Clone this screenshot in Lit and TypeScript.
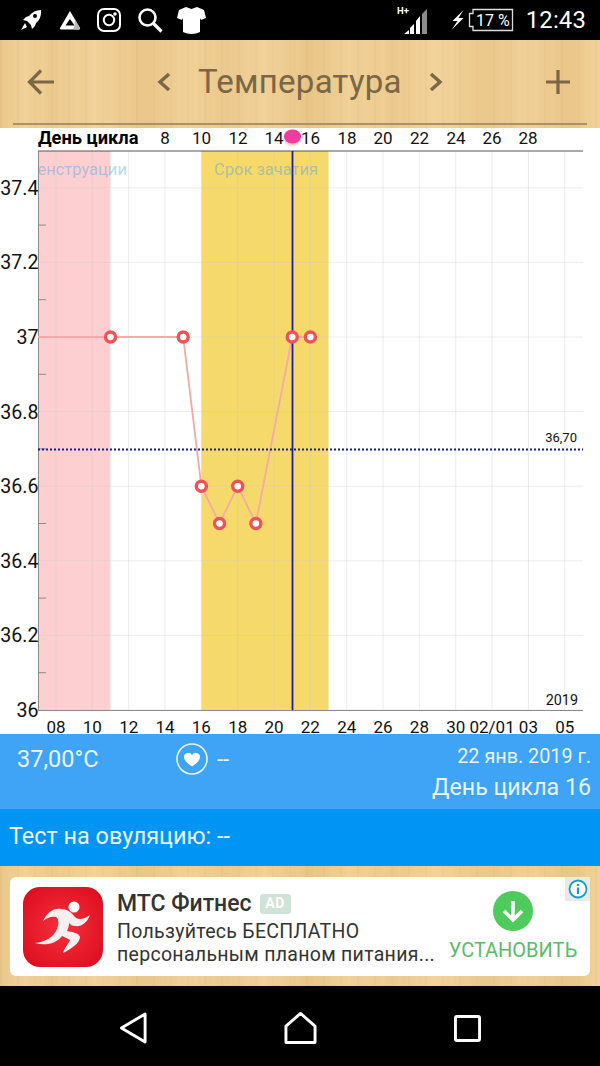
import { LitElement, css, html, svg } from "lit";
import { customElement } from "lit/decorators.js";

const WOOD = css`
  background-color: #eecc91;
  background-image:
    linear-gradient(90deg,
      rgba(190,140,60,.08) 0, rgba(255,235,190,.14) 4%, rgba(190,140,60,.04) 9%,
      rgba(255,235,190,.18) 16%, rgba(190,140,60,.10) 24%, rgba(255,235,190,.12) 31%,
      rgba(190,140,60,.05) 38%, rgba(255,235,190,.16) 44%, rgba(190,140,60,.12) 52%,
      rgba(255,235,190,.12) 58%, rgba(190,140,60,.03) 66%, rgba(255,235,190,.20) 73%,
      rgba(190,140,60,.08) 81%, rgba(255,235,190,.10) 88%, rgba(190,140,60,.10) 95%, rgba(255,235,190,.18) 100%),
    repeating-linear-gradient(90deg, rgba(170,120,50,.05) 0 2px, transparent 2px 7px, rgba(255,240,200,.05) 7px 11px, transparent 11px 17px);
`;

// one grid column is two days wide
const px = (day: number) => 56 + day * 18.17;
const py = (t: number) => 710 - (t - 36) * 373;

const TOP_LABELS = [[165, "8"], [201.5, "10"], [238, "12"], [274, "14"], [310.5, "16"], [347, "18"], [383, "20"], [419.5, "22"], [456, "24"], [492, "26"], [528, "28"]] as const;
const BOTTOM_LABELS = ["08", "10", "12", "14", "16", "18", "20", "22", "24", "26", "28", "30", "02/01", "03", "05"];
const Y_LABELS = [["37.4", 37.4], ["37.2", 37.2], ["37", 37], ["36.8", 36.8], ["36.6", 36.6], ["36.4", 36.4], ["36.2", 36.2], ["36", 36]] as const;
const TICKS = [37.3, 37.1, 36.9, 36.7, 36.5, 36.3, 36.1];
const POINTS: [number, number][] = [[3, 37], [7, 37], [8, 36.6], [9, 36.5], [10, 36.6], [11, 36.5], [13, 37], [14, 37]];

@customElement("temp-chart")
class TempChart extends LitElement {
  static styles = css`
    :host { display: block; height: 606px; background: #fff; }
    svg { display: block; overflow: visible; }
    text { font-family: Roboto, "Liberation Sans", sans-serif; fill: #111; }
    .cyc { font-size: 18.3px; font-weight: 700; fill: #000; }
    .top { font-size: 17px; text-anchor: middle; }
    .bot { font-size: 17px; text-anchor: middle; }
    .ylab { font-size: 19.6px; text-anchor: end; }
    .small { font-size: 13px; text-anchor: end; }
    .year { font-size: 14.4px; text-anchor: end; }
    .band { font-size: 16.5px; fill: #3f9fe6; fill-opacity: .42; }
    .grid { stroke: #c9c9c9; stroke-opacity: .35; stroke-width: 1; }
  `;

  render() {
    const verts = BOTTOM_LABELS.map((_, i) => px(i * 2));
    const line = `38,337 ${POINTS.map(([d, t]) => `${px(d)},${py(t)}`).join(" ")}`;
    return html`<svg width="600" height="606" viewBox="0 128 600 606">
      <defs>
        <clipPath id="plot"><rect x="38" y="151" width="545" height="559"></rect></clipPath>
        <filter id="sh" x="-40%" y="-40%" width="180%" height="180%">
          <feDropShadow dx="0" dy="1.5" stdDeviation="1.5" flood-color="#000" flood-opacity=".3"></feDropShadow>
        </filter>
      </defs>
      <rect x="38" y="151" width="72.5" height="559" fill="#fdcfd1"></rect>
      <rect x="201.5" y="151" width="127" height="559" fill="#f6d96b"></rect>
      ${verts.map((x) => svg`<line class="grid" x1=${x} x2=${x} y1="151" y2="710"></line>`)}
      ${Y_LABELS.map(([, t]) => svg`<line class="grid" x1="38" x2="583" y1=${py(t)} y2=${py(t)}></line>`)}
      ${TICKS.map((t) => svg`<line x1="38" x2="46" y1=${py(t)} y2=${py(t)} stroke="#8a8a8a"></line>`)}
      <g clip-path="url(#plot)">
        <text class="band" x="23" y="175">Менструации</text>
        <text class="band" x="214" y="175">Срок зачатия</text>
      </g>
      <line x1="38" x2="583" y1="151" y2="151" stroke="#555"></line>
      <line x1="38.5" x2="38.5" y1="151" y2="710" stroke="#8c8c8c"></line>
      <line x1="38" x2="583" y1="710.5" y2="710.5" stroke="#8c8c8c"></line>
      <polyline points=${line} fill="none" stroke="#f5a9a9" stroke-width="1.8"></polyline>
      <line x1="38" x2="583" y1="449.5" y2="449.5" stroke="#1818b0" stroke-width="2" stroke-dasharray="2 2"></line>
      <line x1="292.5" x2="292.5" y1="151" y2="710" stroke="#1f1fa5" stroke-width="1.8"></line>
      ${POINTS.map(([d, t]) => svg`<circle cx=${px(d)} cy=${py(t)} r="5" fill="#fff" stroke="#ee5257" stroke-width="3.4"></circle>`)}
      <text class="cyc" x="38" y="144">День цикла</text>
      ${TOP_LABELS.map(([x, l]) => svg`<text class="top" x=${x} y="144">${l}</text>`)}
      <ellipse cx="292.5" cy="136.500" rx="8.500" ry="7" fill="#ee3a9f" filter="url(#sh)"></ellipse>
      ${Y_LABELS.map(([l, t]) => svg`<text class="ylab" x="38.500" y=${py(t) + 7}>${l}</text>`)}
      ${BOTTOM_LABELS.map((l, i) => svg`<text class="bot" x=${px(i * 2)} y="733">${l}</text>`)}
      <text class="small" x="577" y="442">36,70</text>
      <text class="year" x="578" y="705">2019</text>
    </svg>`;
  }
}

@customElement("app-root")
export class AppRoot extends LitElement {
  static styles = [css`
    :host { display: block; width: 600px; height: 1066px; overflow: hidden; font-family: Roboto, "Liberation Sans", sans-serif; }
    .status { height: 40px; background: #000; display: flex; align-items: center; color: #fff; }
    .status svg { display: block; flex: none; }
    .left { display: flex; align-items: center; gap: 16px; padding-left: 19px; }
    .right { margin-left: auto; display: flex; align-items: center; padding-right: 14px; }
    .time { font-size: 23.8px; margin-left: 12px; letter-spacing: .2px; }
    .hdr { height: 88px; box-sizing: border-box; padding: 0 13px 3px; }
    .hdr-row { height: 85px; box-sizing: border-box; display: flex; align-items: center; color: #7b6646; border-bottom: 2px solid #a8926b; }
    .hdr-row svg { display: block; flex: none; }
    .title { font-size: 33px; margin: 0 26px 0 26px; white-space: nowrap; letter-spacing: .25px; }
    .spacer { flex: 1; }
    .info { height: 75px; background: #3fa3f6; color: #eaf5ff; display: flex; box-sizing: border-box; padding: 0 9px 0 17px; }
    .temp { font-size: 23.5px; margin-top: 11px; width: 159px; }
    .heart { margin-top: 10px; display: flex; gap: 9px; font-size: 22px; align-items: center; height: 30px; }
    .heart svg { display: block; }
    .date { margin-left: auto; text-align: right; }
    .d1 { font-size: 19.8px; margin-top: 10px; line-height: 26px; }
    .d2 { font-size: 23.2px; line-height: 32px; margin-top: 1px; }
    .test { height: 57px; background: #0094f4; color: #eaf5ff; font-size: 23.4px; display: flex; align-items: center; padding: 0 0 4px 9px; box-sizing: border-box; }
    .adwrap { height: 120px; box-sizing: border-box; padding: 11px 10px 10px; }
    .ad { position: relative; height: 99px; background: #fff; border-radius: 6px; display: flex; align-items: center; padding-left: 13px; box-sizing: border-box; }
    .ad svg { display: block; flex: none; }
    .copy { margin-left: 14px; width: 332px; color: #333; margin-top: 2px; }
    .name { display: flex; align-items: center; font-size: 23px; font-weight: 500; line-height: 33px; margin-top: -2px; }
    .tag { margin-left: 8px; width: 31px; height: 20px; background: #cfe3d8; color: #fff; font-size: 14px; font-weight: 700; border-radius: 3px; display: flex; align-items: center; justify-content: center; letter-spacing: .5px; }
    .line { font-size: 19.5px; line-height: 23px; white-space: nowrap; letter-spacing: .3px; }
    .cta { width: 128px; display: flex; flex-direction: column; align-items: center; color: #5cbb68; font-size: 20px; white-space: nowrap; }
    .cta span { margin-top: 7px; line-height: 24px; }
    .i { position: absolute; right: 0; top: 0; width: 25px; height: 24px; background: #e9e9e9; display: flex; align-items: center; justify-content: center; }
    .nav { height: 80px; background: #000; display: flex; align-items: center; justify-content: center; padding-top: 4px; box-sizing: border-box; }
    .nav svg { display: block; flex: none; }
  `, css`.wood { ${WOOD} }`];

  render() {
    return html`
      <div class="status">
        <div class="left">
          <svg width="24" height="26" viewBox="0 0 24 26"><path fill="#fff" d="M22 3c-5 0-9 2-12 6l-3 1-3 3 4 1 4 4 1 4 3-3 1-3c4-3 5.500-8 5-13zM16 7a2 2 0 110 4 2 2 0 010-4zM6 16l-4 7 6-3z"/></svg>
          <svg width="22" height="20" viewBox="0 0 22 20"><path fill="#fff" fill-rule="evenodd" d="M11 1l10 17a1 1 0 01-1 1.500H2A1 1 0 011 18zm0 8l-4.500 6.500h9z"/><path fill="#b5b5b5" d="M16 9.500l5 8.500-1 1.500h-6l1.500-4z"/></svg>
          <svg width="24" height="24" viewBox="0 0 24 24" fill="none" stroke="#fff" stroke-width="2"><rect x="1" y="1" width="22" height="22" rx="6"/><circle cx="12" cy="12" r="5.200"/><circle cx="18" cy="6" r=".8" fill="#fff"/></svg>
          <svg width="26" height="26" viewBox="0 0 26 26" fill="none" stroke="#fff"><circle cx="10.500" cy="10.500" r="8" stroke-width="2.600"/><path d="M16.500 16.500l8 8" stroke-width="3.200"/></svg>
          <svg width="29" height="27" viewBox="0 0 29 27" style="margin-left:-2px"><path fill="#fff" d="M9 0l5.500 2L20 0l7 3 2 8-5 2-1-2v14c-5 2.500-12 2.500-17 0V11l-1 2-5-2 2-8z"/></svg>
        </div>
        <div class="right">
          <svg width="31" height="30" viewBox="0 0 31 30"><text x="0" y="9" font-size="9.500" font-weight="700" fill="#fff" font-family="Roboto, sans-serif">H+</text><path fill="#fff" d="M7 29l5-4v4zM13 29v-6l4-4v10zM19 29V16l4-5v18z"/><path fill="#8c8c8c" d="M25 29V9l5-5v25z"/></svg>
          <svg width="15" height="22" viewBox="0 0 14 22" style="margin-left:22px"><path fill="#fff" d="M13 1L2 12h5l-6 9 12-12H8z"/></svg>
          <svg width="46" height="24" viewBox="0 0 46 24" style="margin-left:3px"><path fill="none" stroke="#ddd" stroke-width="1.300" d="M5 5.500V1.500h39.500v21H5v-4H1.500v-13z"/><text x="8" y="18" font-size="16" fill="#fff" font-family="Roboto, sans-serif">17 %</text></svg>
          <span class="time">12:43</span>
        </div>
      </div>

      <div class="hdr wood">
        <div class="hdr-row">
          <svg width="30" height="30" viewBox="0 0 30 30" fill="none" stroke="currentColor" stroke-width="3.200" style="margin-left:13px"><path d="M28 15H4M15 3.500L3.500 15 15 26.500"/></svg>
          <svg width="16" height="22" viewBox="0 0 16 22" fill="none" stroke="currentColor" stroke-width="3.400" style="margin-left:100px"><path d="M13 3L4 11l9 8"/></svg>
          <span class="title">Температура</span>
          <svg width="16" height="22" viewBox="0 0 16 22" fill="none" stroke="currentColor" stroke-width="3.400"><path d="M3 3l9 8-9 8"/></svg>
          <span class="spacer"></span>
          <svg width="26" height="26" viewBox="0 0 26 26" fill="none" stroke="currentColor" stroke-width="3.200" style="margin-right:16px"><path d="M13 1v24M1 13h24"/></svg>
        </div>
      </div>

      <temp-chart></temp-chart>

      <div class="info">
        <div class="temp">37,00°C</div>
        <div class="heart">
          <svg width="32" height="32" viewBox="0 0 32 32"><circle cx="16" cy="16" r="15" fill="none" stroke="#eaf5ff" stroke-width="1.600"/><path fill="#fff" d="M16 23.500c-5-3.500-8-6-8-9.500a4.200 4.200 0 018-1.800A4.200 4.200 0 0124 14c0 3.500-3 6-8 9.500z"/></svg>
          <span>--</span>
        </div>
        <div class="date">
          <div class="d1">22 янв. 2019 г.</div>
          <div class="d2">День цикла 16</div>
        </div>
      </div>

      <div class="test">Тест на овуляцию: --</div>

      <div class="adwrap wood">
        <div class="ad">
          <svg width="80" height="80" viewBox="0 0 80 80">
            <defs><radialGradient id="red" cx=".5" cy=".5" r=".75"><stop offset="0" stop-color="#f5323c"/><stop offset="1" stop-color="#d9061a"/></radialGradient></defs>
            <rect width="80" height="80" rx="17" fill="url(#red)"/>
            <circle cx="51" cy="20" r="5.500" fill="#fff"/>
            <path fill="#f6f0f0" d="M20 34C24 26 30 21 38 22C44 22 48 25 51 29C54 33 60 33 67 28C64 36 58 40 52 39C49 39 47 37 46 36C46 39 45 42 44 44C49 45 56 46 57 50C57 56 48 62 40 66C42 60 46 56 47 53C44 51 41 50 39 49C33 57 22 59 12 56C22 55 31 50 34 42C36 37 36 32 33 30C28 29 24 31 20 34Z"/>
          </svg>
          <div class="copy">
            <div class="name">МТС Фитнес<span class="tag">AD</span></div>
            <div class="line">Пользуйтесь БЕСПЛАТНО</div>
            <div class="line">персональным планом питания...</div>
          </div>
          <div class="cta">
            <svg width="40" height="40" viewBox="0 0 40 40"><circle cx="20" cy="20" r="20" fill="#4fca5d"/><path fill="none" stroke="#fff" stroke-width="3.600" d="M20 10v18M11 20l9 9 9-9"/></svg>
            <span>УСТАНОВИТЬ</span>
          </div>
          <div class="i">
            <svg width="20" height="20" viewBox="0 0 20 20"><circle cx="10" cy="10" r="8.500" fill="#fff" stroke="#15a0c8" stroke-width="1.800"/><path stroke="#15a0c8" stroke-width="2.200" d="M10 8.500V15M10 5v2"/></svg>
          </div>
        </div>
      </div>

      <div class="nav">
        <svg width="29" height="34" viewBox="0 0 30 34" fill="none" stroke="#fff" stroke-width="3" stroke-linejoin="round" style="margin-right:136px"><path d="M27 2.500v29L2.500 17z"/></svg>
        <svg width="33" height="34" viewBox="0 0 34 34" fill="none" stroke="#fff" stroke-width="3" stroke-linejoin="round" style="margin-right:137px"><path d="M2 15L17 2l15 13v17H2z"/></svg>
        <svg width="27" height="27" viewBox="0 0 28 28" fill="none" stroke="#fff" stroke-width="3" stroke-linejoin="round"><rect x="1.500" y="1.500" width="25" height="25" rx="1.500"/></svg>
      </div>
    `;
  }
}
